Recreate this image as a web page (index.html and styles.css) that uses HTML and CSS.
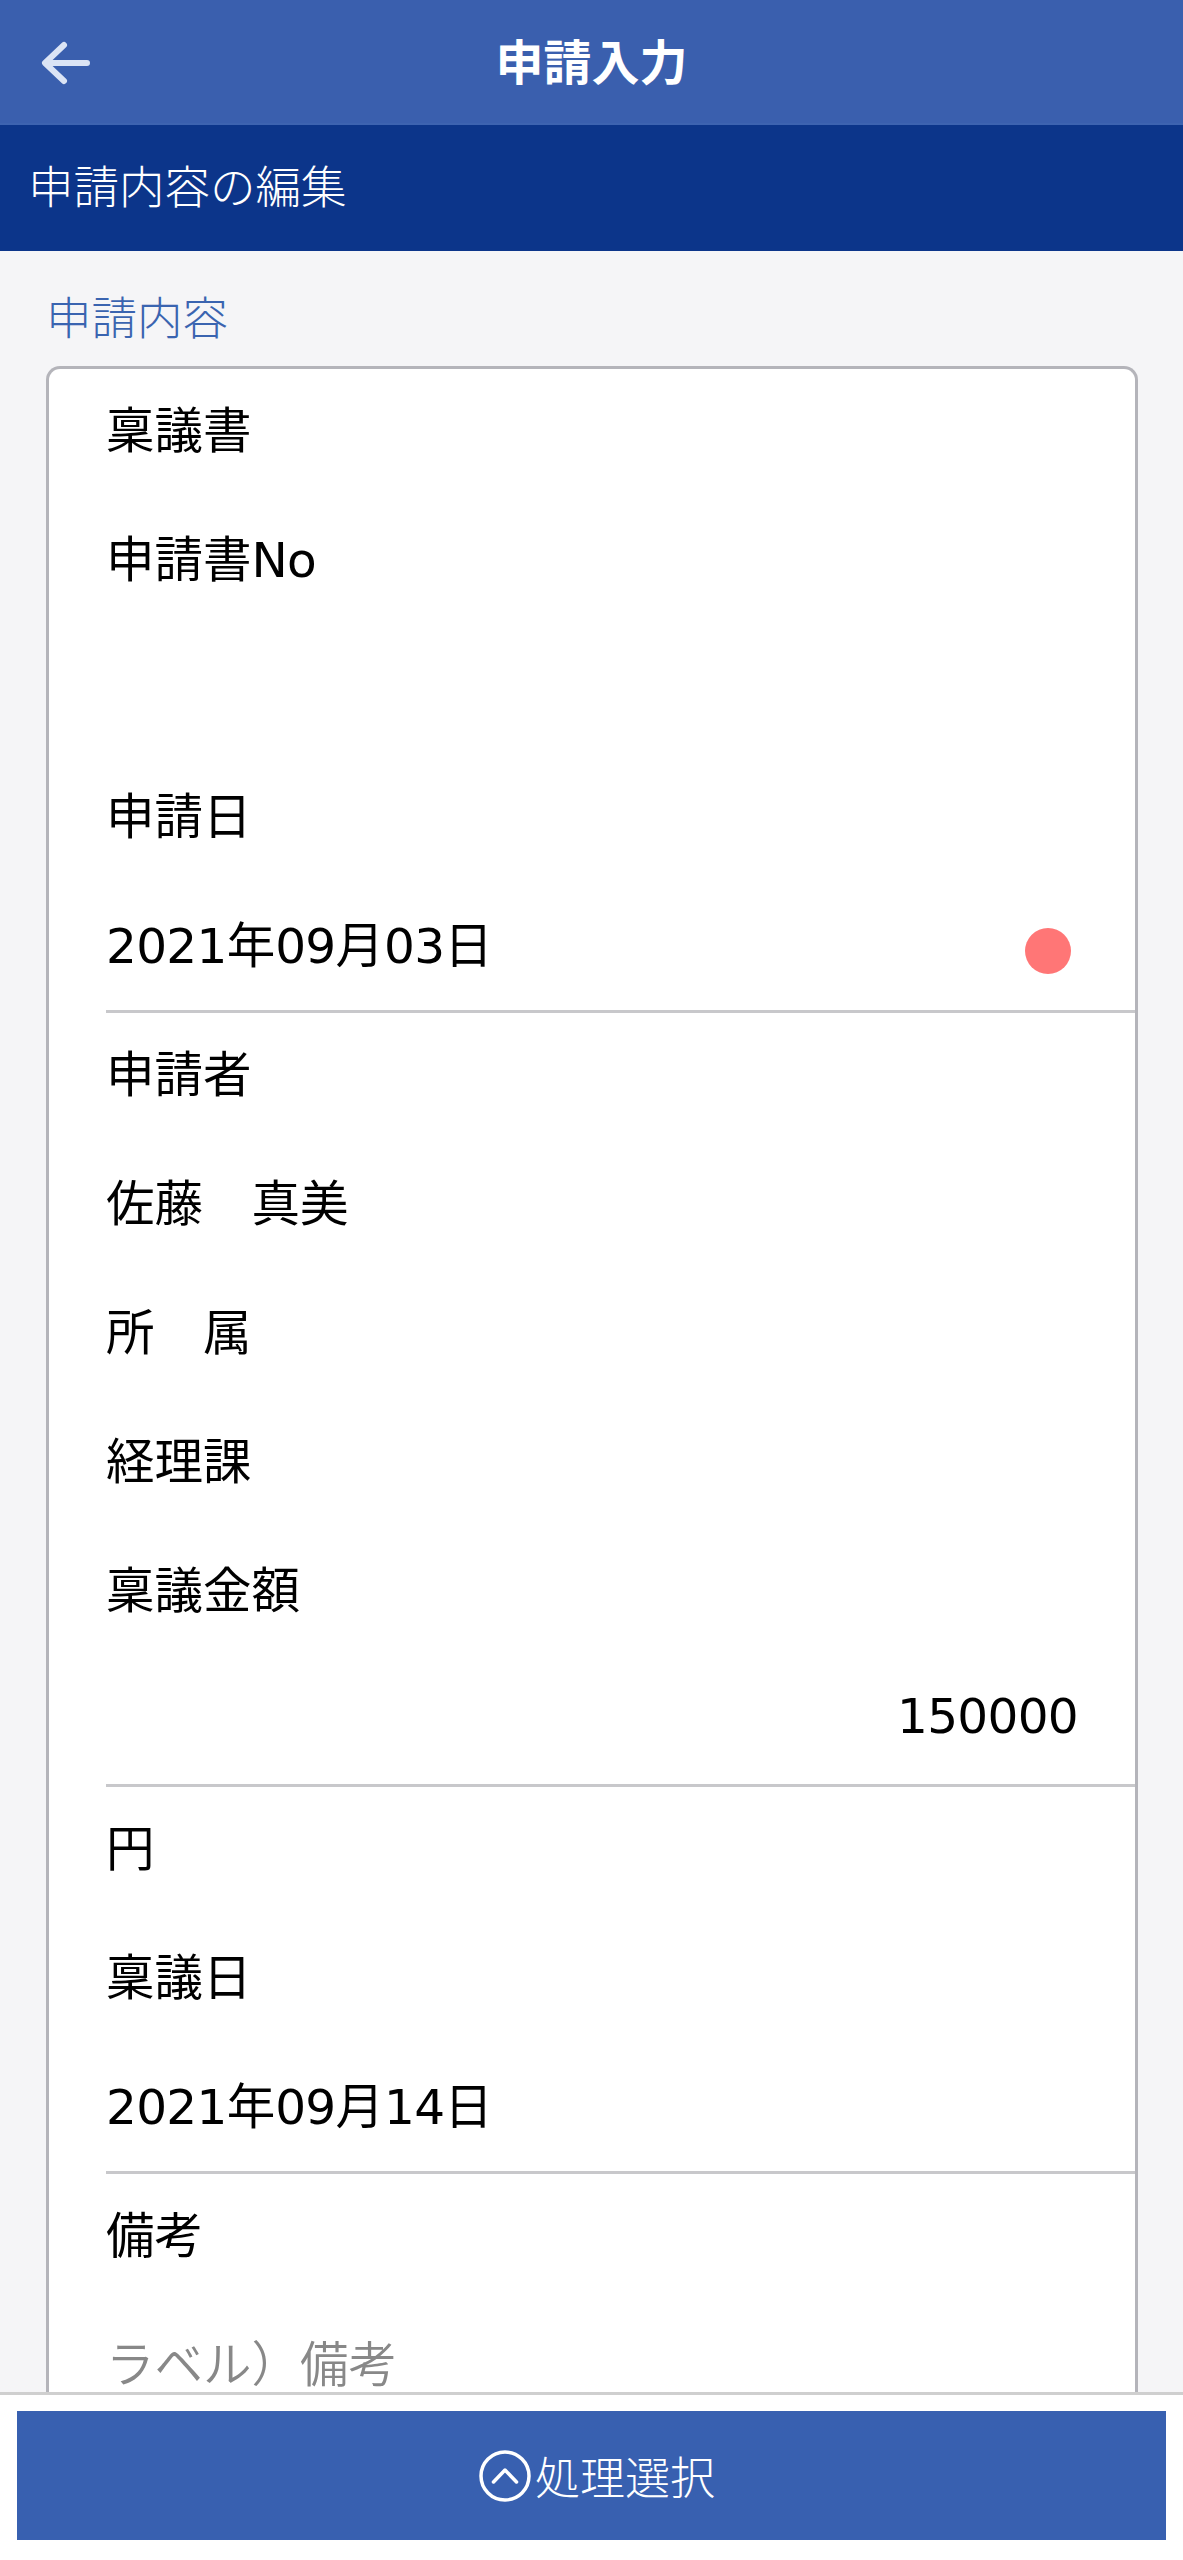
FILE: index.html
```html
<!DOCTYPE html>
<html lang="ja">
<head>
<meta charset="utf-8">
<title>申請入力</title>
<link rel="stylesheet" href="styles.css">
</head>
<body>
<div class="screen">
  <header class="topbar">
    <svg class="back" viewBox="0 0 52 46" width="52" height="46" aria-hidden="true">
      <path d="M47 23H6M24 5 5 23l19 18" fill="none" stroke="#dbe4f5" stroke-width="6" stroke-linecap="round" stroke-linejoin="round"/>
    </svg>
    <h1 class="title">申請入力</h1>
  </header>
  <div class="subbar">申請内容の編集</div>
  <main class="content">
    <h2 class="section">申請内容</h2>
    <section class="card">
      <div class="row lead">稟議書</div>
      <div class="row lead"><span>申請書<span class="num">No</span></span></div>
      <div class="row gap"></div>
      <div class="row">申請日</div>
      <div class="row ruled"><span><span class="num">2021</span>年<span class="num">09</span>月<span class="num">03</span>日</span><span class="dot"></span></div>
      <div class="row">申請者</div>
      <div class="row">佐藤　真美</div>
      <div class="row">所　属</div>
      <div class="row">経理課</div>
      <div class="row">稟議金額</div>
      <div class="row ruled amount"><span class="num">150000</span></div>
      <div class="row">円</div>
      <div class="row">稟議日</div>
      <div class="row ruled"><span><span class="num">2021</span>年<span class="num">09</span>月<span class="num">14</span>日</span></div>
      <div class="row">備考</div>
      <div class="row placeholder">ラベル）備考</div>
    </section>
  </main>
  <footer class="footer">
    <button class="action" type="button">
      <svg class="chev" viewBox="0 0 52 52" width="52" height="52" aria-hidden="true">
        <circle cx="26" cy="26" r="24" fill="none" stroke="#fff" stroke-width="3.5"/>
        <path d="M14.5 32 26 20l11.5 12" fill="none" stroke="#fff" stroke-width="3.5" stroke-linecap="round" stroke-linejoin="round"/>
      </svg>
      <span>処理選択</span>
    </button>
  </footer>
</div>
</body>
</html>
```
FILE: styles.css
```css
* { box-sizing: border-box; }
html, body { margin: 0; padding: 0; }
body {
  font-family: "Noto Sans CJK JP", "Noto Sans", sans-serif;
  background: #f5f5f7;
  color: #000;
}
.screen {
  width: 1183px;
  height: 2560px;
  position: relative;
  overflow: hidden;
  background: #f5f5f7;
}
.topbar {
  height: 125px;
  background: #3a5fae;
  border-bottom: 2px solid #3d63b0;
  padding-bottom: 6px;
  display: flex;
  align-items: center;
  justify-content: center;
  position: relative;
}
.back { position: absolute; left: 40px; top: 40px; }
.title {
  margin: 0;
  font-size: 48px;
  font-weight: 700;
  color: #fff;
  line-height: 1;
}
.subbar {
  height: 126px;
  background: #0c358a;
  color: #fff;
  font-size: 45.5px;
  font-weight: 300;
  line-height: 119px;
  padding-left: 28px;
}
.content { padding: 0 45px 0 46px; }
.section {
  margin: 0;
  height: 115px;
  padding-top: 39px;
  font-size: 45.5px;
  font-weight: 300;
  line-height: 50px;
  color: #3a64b0;
}
.card {
  width: 1092px;
  height: 2100px;
  background: #fff;
  border: 3px solid #b4b4ba;
  border-bottom: 0;
  border-radius: 14px 14px 0 0;
}
.row {
  height: 129px;
  margin-left: 57px;
  padding-bottom: 12px;
  font-size: 48.5px;
  font-weight: 400;
  display: flex;
  align-items: center;
  justify-content: space-between;
  white-space: pre;
}
.lead { padding-bottom: 14px; height: 129.4px; }
.gap { height: 127px; }
.num {
  font-family: "DejaVu Sans", sans-serif;
  letter-spacing: -0.7px;
}
.ruled { box-shadow: inset 0 -3px 0 #c8c8cb; }
.dot {
  width: 46px;
  height: 46px;
  border-radius: 50%;
  background: #ff7676;
  margin: 18px 64px 0 0;
}
.amount { justify-content: flex-end; padding-right: 57px; }
.placeholder { color: #888; font-weight: 350; }
.footer {
  position: absolute;
  left: 0;
  right: 0;
  bottom: 0;
  height: 168px;
  background: #fff;
  border-top: 3px solid #cfcfcf;
  padding: 16px 17px 0;
}
.action {
  width: 100%;
  height: 129px;
  border: 0;
  background: #3860b0;
  color: #fff;
  font: 300 45px "Noto Sans CJK JP", sans-serif;
  display: flex;
  align-items: center;
  justify-content: center;
  gap: 4px;
  padding: 0 0 0 11px;
}
```
